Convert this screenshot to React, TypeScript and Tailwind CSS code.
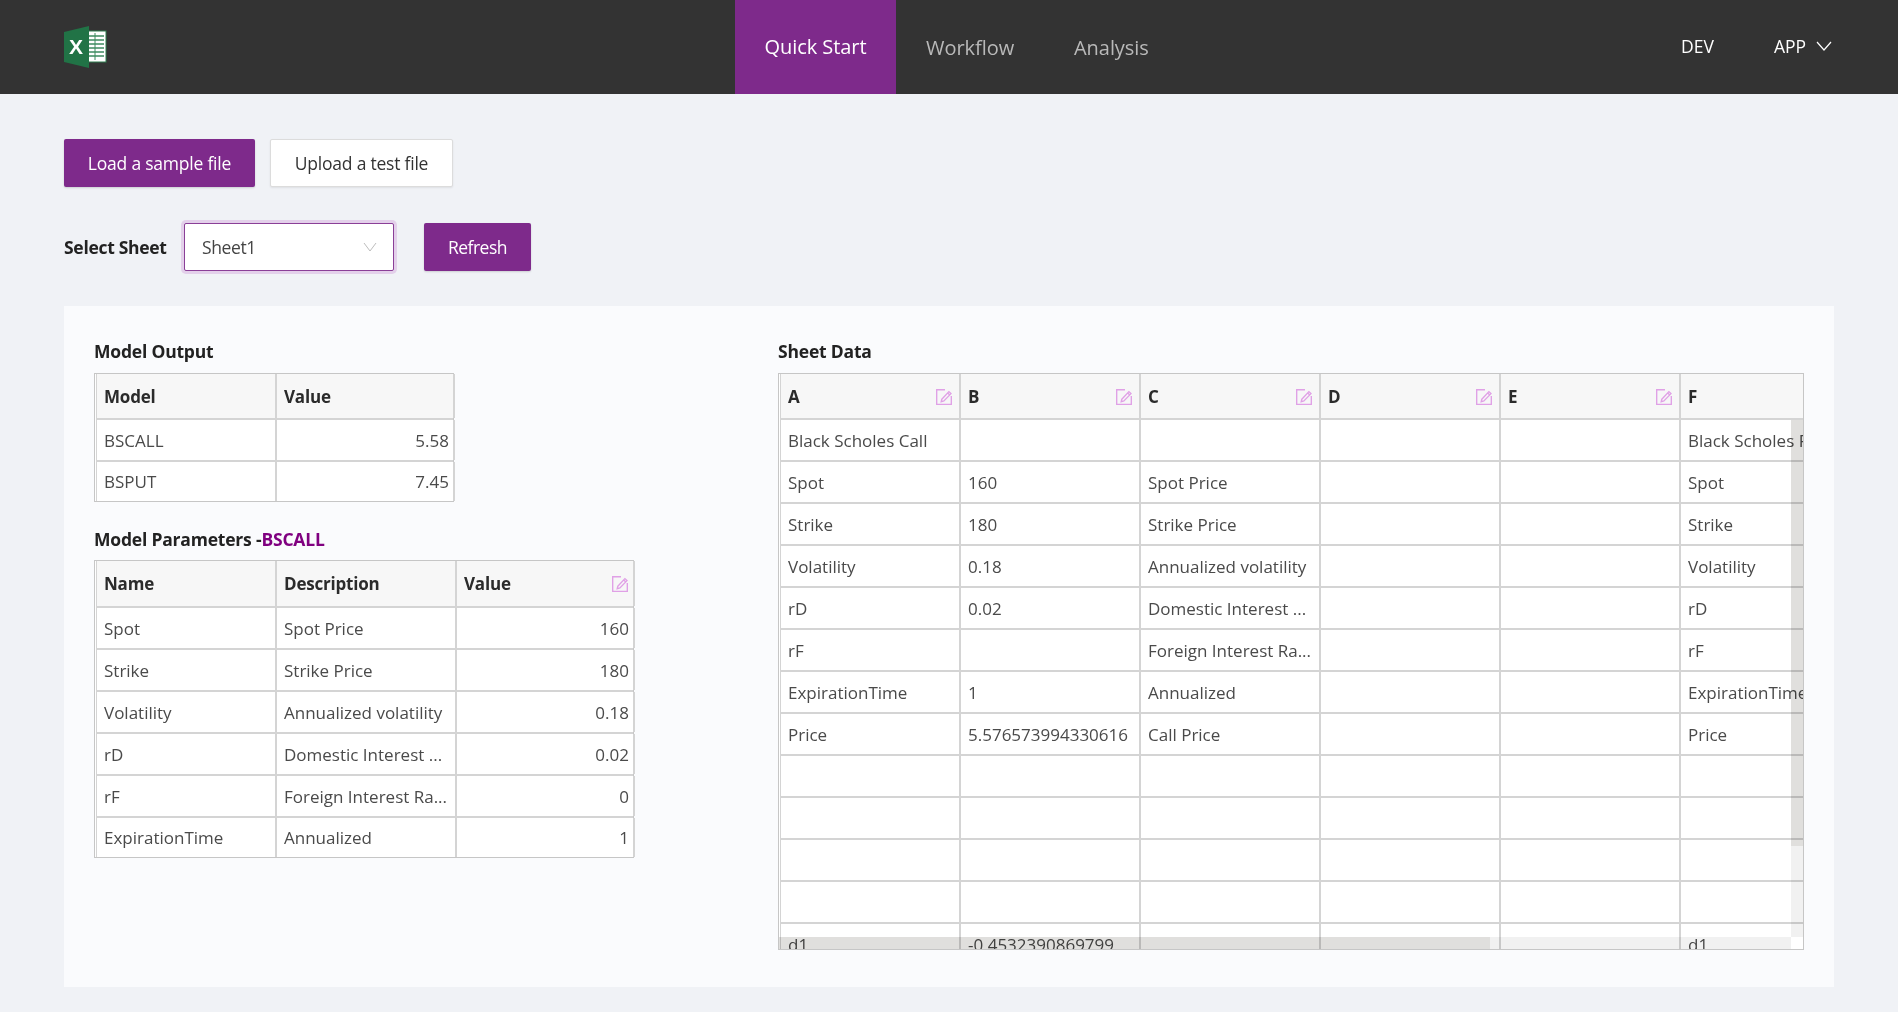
import React from "react";

const FONT = "font-['Open_Sans','Noto_Sans',sans-serif]";

function EditIcon() {
  return (
    <svg width="16" height="16" viewBox="0 0 16 16" fill="none" stroke="#e0a0e6" strokeWidth="1.35" className="shrink-0">
      <path d="M9 0.7H0.7V15.3H15.3V7" />
      <path d="M5.8 10.2L12.9 2.6L15 4.6L7.9 12L5.2 12.7Z M11.7 3.9L13.8 5.9" />
    </svg>
  );
}

function ExcelLogo() {
  return (
    <svg width="43" height="42" viewBox="0 0 43 42">
      <rect x="22" y="5" width="20" height="31" fill="#ffffff" stroke="#2f7d4f" strokeWidth="1" />
      <path d="M25 10H40M25 14H40M25 18H40M25 22H40M25 26H40M25 30H40" stroke="#3d8b5f" strokeWidth="1.6" />
      <path d="M31 7V34" stroke="#3d8b5f" strokeWidth="1" />
      <path d="M0 6L25 0V42L0 36Z" fill="#217346" />
      <text x="12" y="28" textAnchor="middle" fontFamily="'Liberation Sans',sans-serif" fontWeight="700" fontSize="21" fill="#ffffff">X</text>
    </svg>
  );
}

function Cell({ children, right, icon, head, w = "w-[180px]", iconPad = "pr-[7px]" }: { children?: React.ReactNode; right?: boolean; icon?: boolean; head?: boolean; w?: string; iconPad?: string }) {
  const pad = right ? "pr-[4px] justify-end" : head ? `${iconPad} justify-between` : "pr-1";
  const tone = head ? "font-bold text-[#2b2b2b] tracking-[-0.2px]" : "text-[#4a4a4a]";
  return (
    <div className={`${w} shrink-0 h-full flex items-center border-r-2 border-[#d4d4d4] overflow-hidden pl-[7px] pt-[1px] ${pad} ${tone}`}>
      <span className="whitespace-nowrap">{children}</span>
      {icon && <EditIcon />}
    </div>
  );
}

function Row({ head, h, children, bare }: { head?: boolean; h?: string; children: React.ReactNode; bare?: boolean }) {
  return (
    <div className={`flex shrink-0 ${h ?? (head ? "h-[46px]" : "h-[42px]")} ${head ? "bg-[#f7f7f7]" : "bg-white"} ${bare ? "" : "border-b-2 border-[#d4d4d4]"}`}>
      {children}
    </div>
  );
}

function Box({ w, children }: { w: string; children: React.ReactNode }) {
  return (
    <div className={`${w} border border-[#c6c6c6] pl-[1px] bg-white text-[17px]`}>
      <div className="border-l border-[#d4d4d4] flex flex-col">{children}</div>
    </div>
  );
}

const sheet: string[][] = [
  ["Black Scholes Call", "", "", "", "", "Black Scholes Put"],
  ["Spot", "160", "Spot Price", "", "", "Spot"],
  ["Strike", "180", "Strike Price", "", "", "Strike"],
  ["Volatility", "0.18", "Annualized volatility", "", "", "Volatility"],
  ["rD", "0.02", "Domestic Interest ...", "", "", "rD"],
  ["rF", "", "Foreign Interest Ra...", "", "", "rF"],
  ["ExpirationTime", "1", "Annualized", "", "", "ExpirationTime"],
  ["Price", "5.576573994330616", "Call Price", "", "", "Price"],
  ["", "", "", "", "", ""],
  ["", "", "", "", "", ""],
  ["", "", "", "", "", ""],
  ["", "", "", "", "", ""],
  ["d1", "-0.4532390869799", "", "", "", "d1"],
];

const params = [
  ["Spot", "Spot Price", "160"],
  ["Strike", "Strike Price", "180"],
  ["Volatility", "Annualized volatility", "0.18"],
  ["rD", "Domestic Interest ...", "0.02"],
  ["rF", "Foreign Interest Ra...", "0"],
  ["ExpirationTime", "Annualized", "1"],
];

const TITLE = "text-[17.5px] tracking-[-0.2px] font-bold text-[#222] h-[26px] leading-[26px]";

export default function App() {
  return (
    <div className={`${FONT} min-h-[1012px] bg-[#f0f2f6] text-[#333]`}>
      <header className="h-[94px] bg-[#333333] flex items-stretch pl-[64px] pr-[66px]">
        <div className="w-[671px] flex items-center"><ExcelLogo /></div>
        <nav className="flex items-stretch text-[20px] tracking-[-0.05px] pt-[1px]">
          <div className="w-[161px] bg-[#7e2a8b] -mt-[1px] text-white flex items-center justify-center">Quick Start</div>
          <div className="ml-[30px] flex items-center text-[#b9b9b9] w-[89px]">Workflow</div>
          <div className="ml-[59px] flex items-center text-[#b9b9b9]">Analysis</div>
        </nav>
        <div className="ml-auto flex items-center text-white text-[17.5px] pb-[2px]">
          <span>DEV</span>
          <span className="ml-[60px]">APP</span>
          <svg width="16" height="10" viewBox="0 0 16 10" fill="none" stroke="#fff" strokeWidth="1.2" className="ml-[10px]"><path d="M1 1L8 9L15 1" /></svg>
        </div>
      </header>

      <main className="px-[64px]">
        <div className="pt-[45px] flex gap-[15px] text-[17.5px] tracking-[-0.22px]">
          <button className="h-[48px] w-[191px] bg-[#7e2a8b] text-white rounded-[2px] shadow-[0_1px_2px_rgba(0,0,0,0.15)]">Load a sample file</button>
          <button className="h-[48px] w-[183px] bg-white text-[#333] border border-[#dcdcdc] rounded-[2px] shadow-[0_1px_2px_rgba(0,0,0,0.08)]">Upload a test file</button>
        </div>

        <div className="mt-[36px] flex items-center h-[48px] text-[17.5px]">
          <span className="w-[120px] font-bold text-[#222] tracking-[-0.3px]">Select Sheet</span>
          <div className="w-[210px] h-[48px] bg-white border border-[#8a3f97] rounded-[2px] ring-[3px] ring-[#e3d0ea] flex items-center justify-between pl-[17px] pr-[16px] text-[#444] tracking-[-0.4px]">
            <span>Sheet1</span>
            <svg width="14" height="10" viewBox="0 0 14 10" fill="none" stroke="#bdbdbd" strokeWidth="1"><path d="M1 1L7 9L13 1" /></svg>
          </div>
          <button className="ml-[30px] h-[48px] w-[107px] bg-[#7e2a8b] text-white rounded-[2px] tracking-[-0.5px] shadow-[0_1px_2px_rgba(0,0,0,0.15)]">Refresh</button>
        </div>

        <section className="mt-[35px] h-[681px] bg-[#fafbfd] px-[30px] pt-[32px] flex">
          <div className="w-[684px] shrink-0">
            <h3 className={TITLE}>Model Output</h3>
            <div className="mt-[9px]">
              <Box w="w-[360px]">
                <Row head><Cell head>Model</Cell><Cell head w="w-[178px]">Value</Cell></Row>
                <Row><Cell>BSCALL</Cell><Cell right w="w-[178px]">5.58</Cell></Row>
                <Row bare h="h-[39px]"><Cell>BSPUT</Cell><Cell right w="w-[178px]">7.45</Cell></Row>
              </Box>
            </div>
            <h3 className={`mt-[24px] ${TITLE}`}>Model Parameters -<span className="text-[#800080]">BSCALL</span></h3>
            <div className="mt-[8px]">
              <Box w="w-[540px]">
                <Row head h="h-[47px]"><Cell head>Name</Cell><Cell head>Description</Cell><Cell head icon iconPad="pr-[5px]" w="w-[178px]">Value</Cell></Row>
                {params.map((p, i) => {
                  const last = i === params.length - 1;
                  return (
                    <Row key={p[0]} bare={last} h={last ? "h-[39px]" : undefined}>
                      <Cell>{p[0]}</Cell><Cell>{p[1]}</Cell><Cell right w="w-[178px]">{p[2]}</Cell>
                    </Row>
                  );
                })}
              </Box>
            </div>
          </div>

          <div className="w-[1026px] shrink-0">
            <h3 className={TITLE}>Sheet Data</h3>
            <div className="mt-[9px] relative w-[1026px] h-[577px] border border-[#c6c6c6] pl-[1px] bg-white overflow-hidden text-[17px]">
              <div className="border-l border-[#d4d4d4] flex flex-col w-[1082px] h-[575px] overflow-hidden">
                <Row head>
                  {["A", "B", "C", "D", "E"].map((c) => <Cell key={c} head icon>{c}</Cell>)}
                  <Cell head>F</Cell>
                </Row>
                {sheet.map((r, i) => (
                  <Row key={i}>{r.map((c, j) => <Cell key={j}>{c}</Cell>)}</Row>
                ))}
              </div>
              <div className="absolute right-0 top-[46px] w-[12px] h-[517px] bg-[#f1f1f1] mix-blend-multiply">
                <div className="h-[426px] bg-[#e0dfdd]" />
              </div>
              <div className="absolute left-0 bottom-0 right-[12px] h-[12px] bg-[#f1f1f1] mix-blend-multiply">
                <div className="w-[711px] h-full bg-[#e0dfdd]" />
              </div>
              <div className="absolute right-0 bottom-0 w-[12px] h-[12px] bg-white" />
            </div>
          </div>
        </section>
      </main>
    </div>
  );
}
